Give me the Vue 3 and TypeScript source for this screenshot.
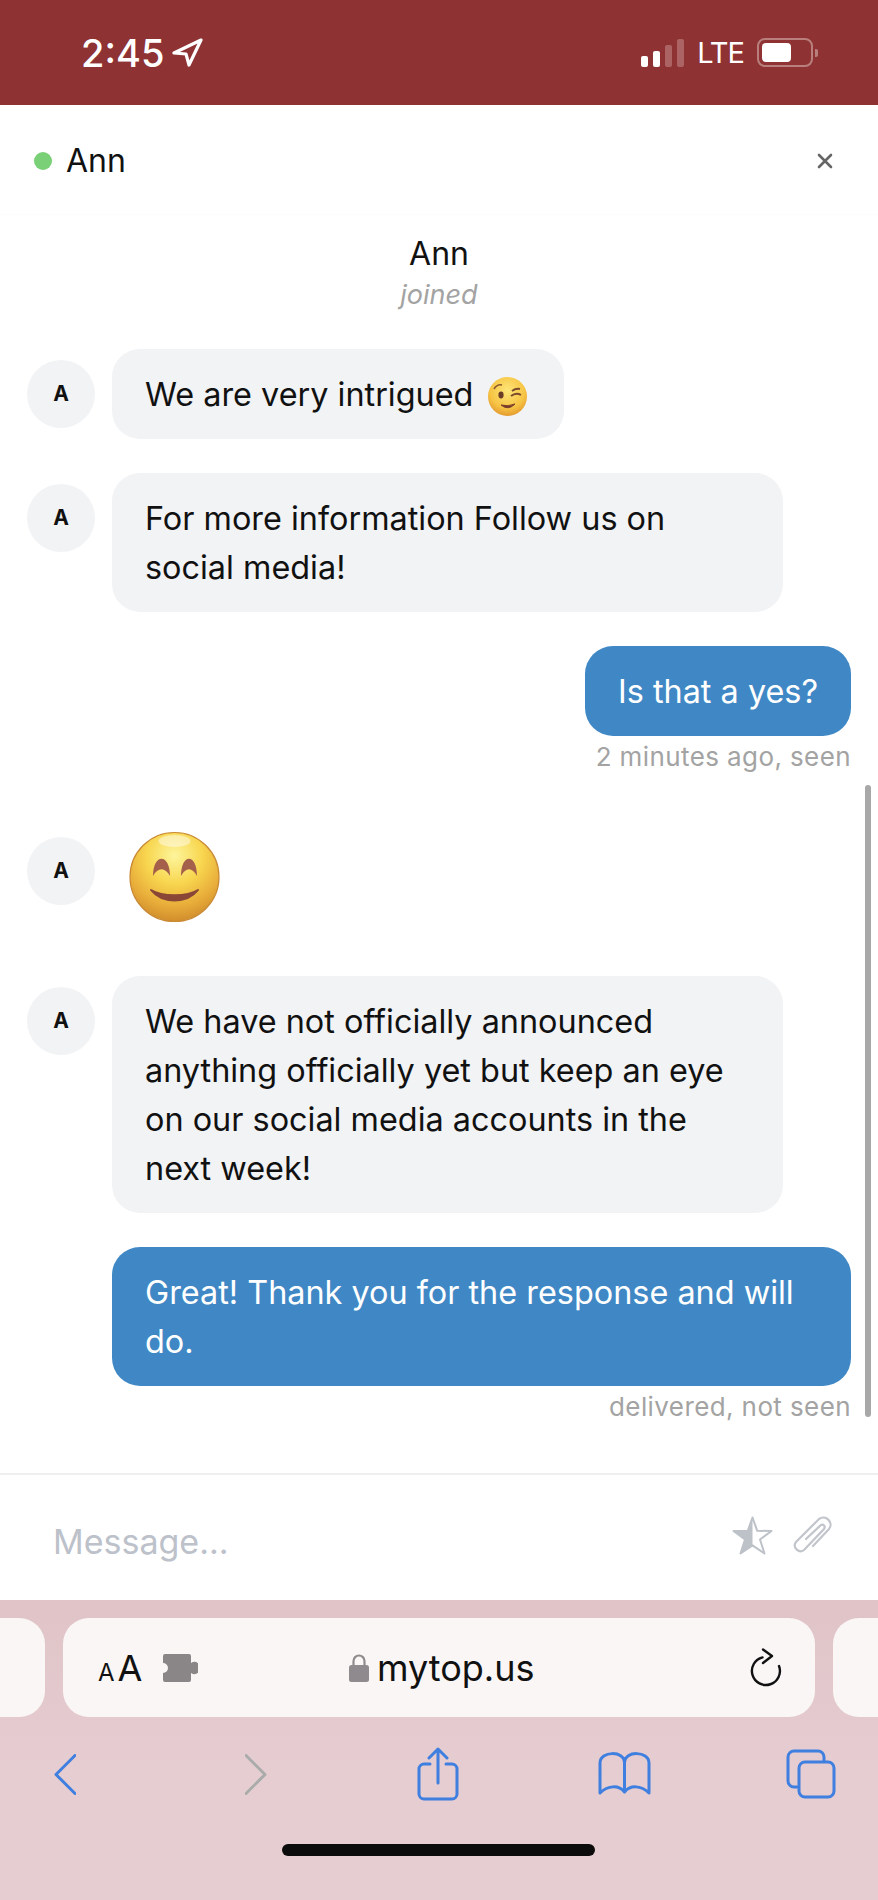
<script setup lang="ts">
interface Message {
  id: number
  text: string
  mine?: boolean
  caption?: string
  emoji?: 'wink' | 'smile'
}

const messages: Message[] = [
  { id: 1, text: 'We are very intrigued', emoji: 'wink' },
  { id: 2, text: 'For more information Follow us on social media!' },
  { id: 3, text: 'Is that a yes?', mine: true, caption: '2 minutes ago, seen' },
  { id: 4, text: '', emoji: 'smile' },
  { id: 5, text: 'We have not officially announced anything officially yet but keep an eye on our social media accounts in the next week!' },
  { id: 6, text: 'Great! Thank you for the response and will do.', mine: true, caption: 'delivered, not seen' },
]
</script>

<template>
  <div class="phone">
    <div class="status-bar">
      <div class="status-left">
        <span class="clock">2:45</span>
        <svg class="location" width="31" height="29" viewBox="0 0 31 29">
          <path d="M29 2 L2 15 L14 16 L17 27 Z" fill="none" stroke="#fff" stroke-width="3.2" stroke-linejoin="round" />
        </svg>
      </div>
      <div class="status-right">
        <div class="signal">
          <i class="on s1"></i>
          <i class="on s2"></i>
          <i class="s3"></i>
          <i class="s4"></i>
        </div>
        <span class="lte">LTE</span>
        <div class="battery"><i></i></div>
        <span class="nub"></span>
      </div>
    </div>

    <header class="chat-header">
      <span class="dot"></span>
      <span class="name">Ann</span>
      <svg class="close" width="16" height="16" viewBox="0 0 16 16">
        <path d="M2 2 L14 14 M14 2 L2 14" stroke="#666" stroke-width="2.6" stroke-linecap="round" />
      </svg>
    </header>

    <main class="chat">
      <div class="joined">
        <div class="joined-name">Ann</div>
        <div class="joined-text">joined</div>
      </div>

      <div class="list">
        <template v-for="m in messages" :key="m.id">
          <div v-if="m.mine" class="mine-group">
            <div class="bubble mine">{{ m.text }}</div>
            <div class="caption">{{ m.caption }}</div>
          </div>
          <div v-else class="row" :class="{ 'emoji-row': m.emoji === 'smile' }">
            <div class="avatar">A</div>
            <div v-if="m.emoji === 'smile'" class="big-emoji">
              <svg width="91" height="92" viewBox="0 0 91 92">
                <defs>
                  <radialGradient id="smileFace" cx="50%" cy="26%" r="75%">
                    <stop offset="0%" stop-color="#fdf59c" />
                    <stop offset="42%" stop-color="#f8d64f" />
                    <stop offset="75%" stop-color="#e8ad3a" />
                    <stop offset="100%" stop-color="#d08c2b" />
                  </radialGradient>
                </defs>
                <circle cx="45.5" cy="46" r="44.5" fill="url(#smileFace)" stroke="#c98a34" stroke-width="1.2" />
                <ellipse cx="45.5" cy="10" rx="16" ry="6" fill="#fff" opacity="0.45" />
                <path d="M24 45 C24 22 41 22 41 45 C36 36 29 36 24 45 Z" fill="#a5604c" />
                <path d="M52 45 C52 22 68 22 68 45 C63 36 57 36 52 45 Z" fill="#a5604c" />
                <path d="M22 59 C33 73 58 73 69 59 C58 66 33 66 22 59 Z" fill="#8a4636" stroke="#8a4636" stroke-width="2" stroke-linejoin="round" />
              </svg>
            </div>
            <div v-else class="bubble">
              {{ m.text }}
              <svg v-if="m.emoji === 'wink'" class="wink" width="39" height="39" viewBox="0 0 39 39">
                <defs>
                  <radialGradient id="winkFace" cx="50%" cy="35%" r="65%">
                    <stop offset="0%" stop-color="#fde678" />
                    <stop offset="70%" stop-color="#f6c343" />
                    <stop offset="100%" stop-color="#e49a2f" />
                  </radialGradient>
                </defs>
                <circle cx="19.5" cy="19.5" r="19.5" fill="url(#winkFace)" />
                <ellipse cx="13" cy="18" rx="2.6" ry="3.4" fill="#6a3d28" />
                <path d="M6 12 Q9 7 14 8" fill="none" stroke="#8a5a30" stroke-width="1.5" />
                <path d="M23 19 Q28 15 33 18 M24 14 Q28 11 32 12" fill="none" stroke="#7a4a2c" stroke-width="2" />
                <path d="M13 28 Q20 34 27 27 Q20 30 13 28 Z" fill="#7a3d2c" stroke="#7a3d2c" />
              </svg>
            </div>
          </div>
        </template>
      </div>
      <div class="scroll-thumb"></div>
    </main>

    <div class="composer">
      <span class="placeholder">Message...</span>
      <div class="composer-icons">
        <svg width="41" height="39" viewBox="0 0 41 39">
          <path d="M20.5 1.5 L25.2 14.8 L39.5 15 L28 23.5 L32.5 37.5 L20.5 29.3 L8.5 37.5 L13 23.5 L1.5 15 L15.8 14.8 Z" fill="none" stroke="#bdc1c8" stroke-width="2" stroke-linejoin="round" />
          <path d="M20.5 1.5 L15.8 14.8 L1.5 15 L13 23.5 L8.5 37.5 L20.5 29.3 Z" fill="#bdc1c8" />
        </svg>
        <svg width="40" height="38" viewBox="0 0 40 38">
          <path d="M20 30 L36 13 C41 7 33 -2 26 3 L3 26 C-1 31 6 38 11 34 L31 13 C33 10 30 8 28 9 L13 23" fill="none" stroke="#c2c5cb" stroke-width="2.2" stroke-linecap="round" />
        </svg>
      </div>
    </div>

    <div class="browser">
      <div class="tabs">
        <div class="tab-side left"></div>
        <div class="url-bar">
          <div class="aa"><span class="small">A</span><span class="big">A</span></div>
          <svg class="puzzle" width="35" height="28" viewBox="0 0 35 28">
            <path d="M2 0 H26 A2 2 0 0 1 28 2 V9 A6 6 0 1 1 28 19 V26 A2 2 0 0 1 26 28 H2 A2 2 0 0 1 0 26 V19 A5 5 0 0 0 0 9 V2 A2 2 0 0 1 2 0 Z" fill="#8a8688" />
          </svg>
          <div class="address">
            <svg width="20" height="28" viewBox="0 0 20 28">
              <path d="M4.5 12 V7 A5.5 5.5 0 0 1 15.5 7 V12" fill="none" stroke="#8f8a8d" stroke-width="2.2" />
              <rect x="0" y="11" width="20" height="17" rx="2.5" fill="#8f8a8d" />
            </svg>
            <span>mytop.us</span>
          </div>
          <svg class="reload" width="33" height="39" viewBox="0 0 33 39">
            <path d="M13.5 9.4 A14 14 0 1 0 30 18" fill="none" stroke="#111" stroke-width="2.4" stroke-linecap="round" />
            <path d="M14 1.5 L23 8 L14 15" fill="none" stroke="#111" stroke-width="2.4" stroke-linecap="round" stroke-linejoin="round" />
          </svg>
        </div>
        <div class="tab-side right"></div>
      </div>

      <nav class="toolbar">
        <svg width="22" height="41" viewBox="0 0 22 41">
          <path d="M21 1.5 L2 20.5 L21 39.5" fill="none" stroke="#3f7fe0" stroke-width="3" stroke-linecap="round" stroke-linejoin="round" />
        </svg>
        <svg class="forward" width="22" height="41" viewBox="0 0 22 41">
          <path d="M1 1.5 L20 20.5 L1 39.5" fill="none" stroke="#a9acab" stroke-width="3" stroke-linecap="round" stroke-linejoin="round" />
        </svg>
        <svg width="42" height="54" viewBox="0 0 42 54">
          <path d="M13 17 H7 A5 5 0 0 0 2 22 V47 A5 5 0 0 0 7 52 H35 A5 5 0 0 0 40 47 V22 A5 5 0 0 0 35 17 H29" fill="none" stroke="#3f7fe0" stroke-width="3" stroke-linecap="round" />
          <path d="M21 36 V2 M12 11 L21 2 L30 11" fill="none" stroke="#3f7fe0" stroke-width="3" stroke-linecap="round" stroke-linejoin="round" />
        </svg>
        <svg width="53" height="44" viewBox="0 0 53 44">
          <path d="M26.5 40 C21 33 10 33 2 41 V11 C2 -1 26.5 -2 26.5 11 C26.5 -2 51 -1 51 11 V41 C43 33 32 33 26.5 40 Z M26.5 11 V40" fill="none" stroke="#3f7fe0" stroke-width="3" stroke-linejoin="round" />
        </svg>
        <svg width="50" height="50" viewBox="0 0 50 50">
          <path d="M11 38 H8 A6 6 0 0 1 2 32 V8 A6 6 0 0 1 8 2 H32 A6 6 0 0 1 38 8 V12" fill="none" stroke="#3f7fe0" stroke-width="3" stroke-linecap="round" />
          <rect x="13" y="13" width="35" height="35" rx="6" fill="none" stroke="#3f7fe0" stroke-width="3" />
        </svg>
      </nav>

      <div class="home-indicator"></div>
    </div>
  </div>
</template>

<style scoped>
.phone {
  display: flex;
  flex-direction: column;
  width: 878px;
  height: 1900px;
  overflow: hidden;
  background: #fff;
  font-family: Inter, "Liberation Sans", sans-serif;
  color: #111;
}

.status-bar {
  display: flex;
  align-items: center;
  justify-content: space-between;
  height: 105px;
  padding: 0 60px 0 81px;
  box-sizing: border-box;
  background: #8f3234;
  color: #fff;
}

.status-left {
  display: flex;
  align-items: center;
  gap: 8px;
}

.clock {
  font-size: 38px;
  font-weight: 500;
  line-height: 44px;
}

.status-right {
  display: flex;
  align-items: center;
}

.signal {
  display: flex;
  align-items: flex-end;
  gap: 5px;
  height: 28px;
  margin-right: 13px;
}

.signal i {
  display: block;
  width: 7px;
  border-radius: 2px;
  background: #ab6463;
}

.signal .on {
  background: #fff;
}

.s1 { height: 11px; }
.s2 { height: 16px; }
.s3 { height: 22px; }
.s4 { height: 28px; }

.lte {
  margin-right: 13px;
  font-size: 29px;
  letter-spacing: -1px;
  line-height: 36px;
  font-weight: 400;
}

.battery {
  display: flex;
  align-items: center;
  width: 56px;
  height: 29px;
  box-sizing: border-box;
  padding: 3px;
  border: 2px solid #b87f7c;
  border-radius: 8px;
}

.battery i {
  display: block;
  width: 29px;
  height: 19px;
  border-radius: 4px;
  background: #fff;
}

.nub {
  width: 3px;
  height: 8px;
  margin-left: 2px;
  border-radius: 0 2px 2px 0;
  background: #b87f7c;
}

.chat-header {
  display: flex;
  align-items: center;
  height: 110px;
  padding: 2px 45px 0 34px;
  box-sizing: border-box;
  border-bottom: 1px solid #fcfcfc;
}

.dot {
  width: 18px;
  height: 18px;
  margin-right: 14px;
  border-radius: 50%;
  background: #79d076;
}

.name {
  flex: 1;
  font-size: 32px;
}

.chat {
  position: relative;
  flex: 1;
}

.joined {
  padding-top: 19px;
  text-align: center;
}

.joined-name {
  font-size: 32px;
  line-height: 40px;
}

.joined-text {
  margin-top: 1px;
  font-size: 27px;
  line-height: 40px;
  font-style: italic;
  color: #a3a3a3;
}

.list {
  display: flex;
  flex-direction: column;
  gap: 34px;
  padding: 34px 27px 0;
}

.row {
  display: flex;
  align-items: flex-start;
  gap: 17px;
}

.avatar {
  flex: none;
  width: 68px;
  height: 68px;
  margin-top: 11px;
  border-radius: 50%;
  background: #f2f3f5;
  font-size: 21px;
  font-weight: 700;
  line-height: 68px;
  text-align: center;
}

.emoji-row {
  padding: 22px 0 19px;
}

.emoji-row .avatar {
  margin-top: 6px;
}

.big-emoji {
  display: flex;
  margin-left: 17px;
}

.bubble {
  max-width: 671px;
  box-sizing: border-box;
  padding: 20.5px 33px;
  border-radius: 28px;
  background: #f2f3f5;
  font-size: 32.4px;
  line-height: 49px;
}

.wink {
  margin: 0 4px 0 5px;
  vertical-align: middle;
}

.mine-group {
  display: flex;
  flex-direction: column;
  align-items: flex-end;
}

.mine {
  max-width: 739px;
  background: #3f88c5;
  color: #fff;
}

.caption {
  margin-top: 3px;
  font-size: 26px;
  line-height: 36px;
  letter-spacing: 0.4px;
  color: #a3a3a3;
}

.scroll-thumb {
  position: absolute;
  top: 570px;
  right: 7px;
  width: 6px;
  height: 632px;
  border-radius: 3px;
  background: #a8a8a8;
}

.composer {
  display: flex;
  align-items: center;
  justify-content: space-between;
  height: 127px;
  padding: 7px 46px 0 53px;
  box-sizing: border-box;
  border-top: 2px solid #efefef;
}

.placeholder {
  font-size: 34px;
  color: #bcc1ca;
}

.composer-icons {
  display: flex;
  align-items: center;
  gap: 20px;
  margin-top: -12px;
  margin-right: -1px;
}

.composer-icons svg {
  display: block;
}

.browser {
  display: flex;
  flex-direction: column;
  height: 300px;
  background: linear-gradient(#dfc3c7, #e6cdd1 170px);
  padding-top: 18px;
  box-sizing: border-box;
}

.tabs {
  display: flex;
  gap: 18px;
  height: 99px;
}

.tab-side {
  flex: none;
  background: #faf6f6;
}

.tab-side.left {
  width: 45px;
  border-radius: 0 26px 26px 0;
}

.tab-side.right {
  width: 45px;
  border-radius: 26px 0 0 26px;
}

.url-bar {
  position: relative;
  flex: 1;
  display: flex;
  align-items: center;
  padding: 0 33px 0 35px;
  border-radius: 26px;
  background: #faf6f6;
}

.aa {
  display: flex;
  align-items: baseline;
  font-weight: 400;
  color: #111;
}

.aa .small {
  font-size: 24px;
  margin-right: 3px;
}

.aa .big {
  font-size: 36px;
}

.puzzle {
  margin-left: 21px;
}

.address {
  flex: 1;
  display: flex;
  align-items: center;
  justify-content: center;
  gap: 8px;
  margin-right: 64px;
  font-size: 36px;
  color: #111;
}

.reload {
  flex: none;
}

.toolbar {
  display: grid;
  grid-template-columns: repeat(5, 100px);
  column-gap: 86.5px;
  justify-items: center;
  align-items: center;
  height: 82px;
  margin-top: 16px;
  padding-left: 15px;
}

.toolbar svg {
  display: block;
}

.toolbar .forward {
  margin-left: 8px;
}

.home-indicator {
  align-self: center;
  width: 313px;
  height: 12px;
  margin-top: 29px;
  margin-left: -1px;
  border-radius: 6px;
  background: #0b0b0b;
}
</style>

<style>
body {
  background: #fff;
}
</style>
